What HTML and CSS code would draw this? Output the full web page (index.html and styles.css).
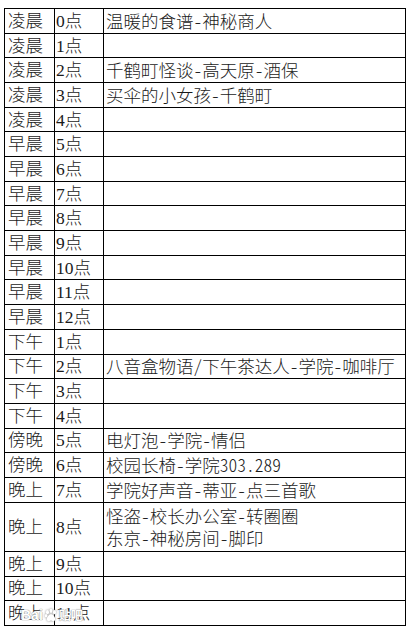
FILE: index.html
```html
<!DOCTYPE html>
<html lang="zh">
<head>
<meta charset="utf-8">
<title>时间表</title>
<link rel="stylesheet" href="styles.css">
</head>
<body>
<div class="sheet">
  <div class="c">凌晨</div><div class="h">0点</div><div class="e">温暖的食谱-神秘商人</div>
  <div class="c">凌晨</div><div class="h">1点</div><div class="e"></div>
  <div class="c">凌晨</div><div class="h">2点</div><div class="e">千鹤町怪谈-高天原-酒保</div>
  <div class="c">凌晨</div><div class="h">3点</div><div class="e">买伞的小女孩-千鹤町</div>
  <div class="c">凌晨</div><div class="h">4点</div><div class="e"></div>
  <div class="c">早晨</div><div class="h">5点</div><div class="e"></div>
  <div class="c">早晨</div><div class="h">6点</div><div class="e"></div>
  <div class="c">早晨</div><div class="h">7点</div><div class="e"></div>
  <div class="c">早晨</div><div class="h">8点</div><div class="e"></div>
  <div class="c">早晨</div><div class="h">9点</div><div class="e"></div>
  <div class="c">早晨</div><div class="h">10点</div><div class="e"></div>
  <div class="c">早晨</div><div class="h">11点</div><div class="e"></div>
  <div class="c">早晨</div><div class="h">12点</div><div class="e"></div>
  <div class="c">下午</div><div class="h">1点</div><div class="e"></div>
  <div class="c">下午</div><div class="h">2点</div><div class="e">八音盒物语/下午茶达人-学院-咖啡厅</div>
  <div class="c">下午</div><div class="h">3点</div><div class="e"></div>
  <div class="c">下午</div><div class="h">4点</div><div class="e"></div>
  <div class="c">傍晚</div><div class="h">5点</div><div class="e">电灯泡-学院-情侣</div>
  <div class="c">傍晚</div><div class="h">6点</div><div class="e">校园长椅-学院303.289</div>
  <div class="c">晚上</div><div class="h">7点</div><div class="e">学院好声音-蒂亚-点三首歌</div>
  <div class="c tall">晚上</div><div class="h tall">8点</div><div class="e tall multi"><span>怪盗-校长办公室-转圈圈</span><span>东京-神秘房间-脚印</span></div>
  <div class="c">晚上</div><div class="h">9点</div><div class="e"></div>
  <div class="c">晚上</div><div class="h">10点</div><div class="e"></div>
  <div class="c">晚上</div><div class="h">11点</div><div class="e"></div>
  <div class="mark"><span class="mark-latin">Bai</span><svg class="paw" viewBox="0 0 20 20" width="14" height="14"><ellipse cx="5" cy="6" rx="2.2" ry="3"/><ellipse cx="10" cy="4" rx="2.2" ry="3"/><ellipse cx="15" cy="6" rx="2.2" ry="3"/><ellipse cx="3" cy="11" rx="2" ry="2.6"/><path d="M10 9c-3 0-6 4-6 7 0 2 2 3 3 3 1.5 0 2-1 3-1s1.5 1 3 1c1 0 3-1 3-3 0-3-3-7-6-7z"/></svg><span class="mark-cjk">贴吧</span></div>
</div>
</body>
</html>
```
FILE: styles.css
```css
html, body {
  margin: 0;
  padding: 0;
  background: #ffffff;
}

body {
  font-family: "Liberation Serif", "Noto Sans CJK SC", serif;
  font-size: 17.5px;
  font-weight: 300;
  color: #1a1a1a;
}

.sheet {
  position: relative;
  margin: 8px 0 0 4px;
  width: 402px;
  height: 618px;
  box-sizing: border-box;
  padding: 1px;
  background: #000000;
  display: grid;
  grid-template-columns: 49px 48px 301px;
  grid-template-rows: repeat(25, 1fr);
  gap: 1px;
}

.c, .h, .e {
  background: #ffffff;
  display: flex;
  align-items: center;
  white-space: nowrap;
  overflow: hidden;
  line-height: 22px;
}

.c {
  padding-left: 3px;
}

.h {
  padding-left: 1px;
}

.e {
  padding-left: 2px;
  font-family: "Noto Sans CJK SC", sans-serif;
  font-feature-settings: "hwid" 1;
}

.tall {
  grid-row: span 2;
}

.multi {
  flex-direction: column;
  align-items: flex-start;
  justify-content: center;
}

.mark {
  position: absolute;
  left: 17px;
  bottom: 3px;
  display: flex;
  align-items: center;
  gap: 1px;
  color: #ffffff;
  text-shadow: 0 0 1px #8a8a8a, 0 0 1px #8a8a8a;
  pointer-events: none;
}

.mark-latin {
  font-family: "Liberation Sans", sans-serif;
  font-weight: bold;
  font-size: 14px;
}

.mark-cjk {
  font-family: "Noto Sans CJK SC", sans-serif;
  font-size: 12px;
  font-weight: bold;
}

.paw {
  fill: #ffffff;
  filter: drop-shadow(0 0 1px #8a8a8a);
}
```
